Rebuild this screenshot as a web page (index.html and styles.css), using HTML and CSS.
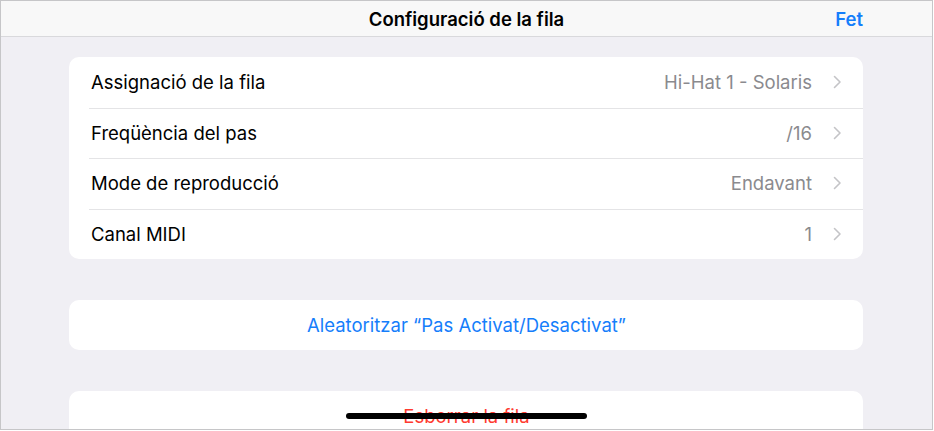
FILE: index.html
```html
<!DOCTYPE html>
<html lang="ca">
<head>
  <meta charset="UTF-8" />
  <meta name="viewport" content="width=device-width, initial-scale=1.0">
  <title>Configuració de la fila</title>
  <link rel="stylesheet" href="styles.css">
</head>
<body>
  <div class="screen">
    <div class="navbar">
      <div class="nav-title">Configuració de la fila</div>
      <div class="nav-done">Fet</div>
    </div>

    <div class="content">
      <div class="group">
        <div class="row">
          <span class="label">Assignació de la fila</span>
          <span class="value">Hi-Hat 1 - Solaris</span>
          <svg class="chevron" viewBox="0 0 9 14"><path d="M1.5 1.5 L7 7 L1.5 12.5" /></svg>
        </div>
        <div class="row">
          <span class="label">Freqüència del pas</span>
          <span class="value">/16</span>
          <svg class="chevron" viewBox="0 0 9 14"><path d="M1.5 1.5 L7 7 L1.5 12.5" /></svg>
        </div>
        <div class="row">
          <span class="label">Mode de reproducció</span>
          <span class="value">Endavant</span>
          <svg class="chevron" viewBox="0 0 9 14"><path d="M1.5 1.5 L7 7 L1.5 12.5" /></svg>
        </div>
        <div class="row">
          <span class="label">Canal MIDI</span>
          <span class="value">1</span>
          <svg class="chevron" viewBox="0 0 9 14"><path d="M1.5 1.5 L7 7 L1.5 12.5" /></svg>
        </div>
      </div>

      <div class="group">
        <div class="row action blue">Aleatoritzar “Pas Activat/Desactivat”</div>
      </div>

      <div class="group">
        <div class="row action red">Esborrar la fila</div>
      </div>
    </div>

    <div class="home-indicator"></div>
  </div>
</body>
</html>
```

FILE: styles.css
```css
html, body {
  margin: 0; padding: 0;
  background: white;
  font-family: 'Inter', 'Roboto', sans-serif;
  -webkit-font-smoothing: antialiased;
}
.screen {
  position: relative;
  width: 933px; height: 430px;
  box-sizing: border-box;
  border: 1px solid #c6c6c8;
  background: #f0eff4;
  overflow: hidden;
}
.navbar {
  height: 35px;
  background: #f8f8f8;
  border-bottom: 1px solid #d9d9dc;
  display: flex; align-items: center; justify-content: center;
  position: relative;
}
.nav-title {
  font-size: 18.5px; font-weight: 600;
  color: #000;
}
.nav-done {
  position: absolute;
  right: 69px; top: 0; bottom: 0;
  display: flex; align-items: center;
  font-size: 18.5px; font-weight: 600;
  color: #157efb;
}
.content {
  padding: 20px 69px 0 68px;
  display: flex; flex-direction: column;
  gap: 41px;
}
.group {
  background: white;
  border-radius: 10px;
  overflow: hidden;
}
.row {
  height: 50.5px;
  display: flex; align-items: center;
  padding: 0 21px 0 22px;
  position: relative;
  font-size: 18.5px;
  color: #000;
}
.row + .row::before {
  content: "";
  position: absolute;
  top: 0; left: 20px; right: 0;
  border-top: 1px solid #e4e4e6;
}
.label { flex: 1; }
.value {
  color: #8a8a8e;
  margin-right: 21px;
}
.chevron {
  width: 9px; height: 14px;
  fill: none;
  stroke: #c4c4c7;
  stroke-width: 1.6;
  stroke-linecap: round;
  stroke-linejoin: round;
}
.action {
  justify-content: center;
  height: 50px;
}
.blue { color: #157efb; }
.red { color: #fe3b30; }
.home-indicator {
  position: absolute;
  left: 345px; top: 412px;
  width: 241px; height: 6px;
  border-radius: 3px;
  background: #000;
}
```
